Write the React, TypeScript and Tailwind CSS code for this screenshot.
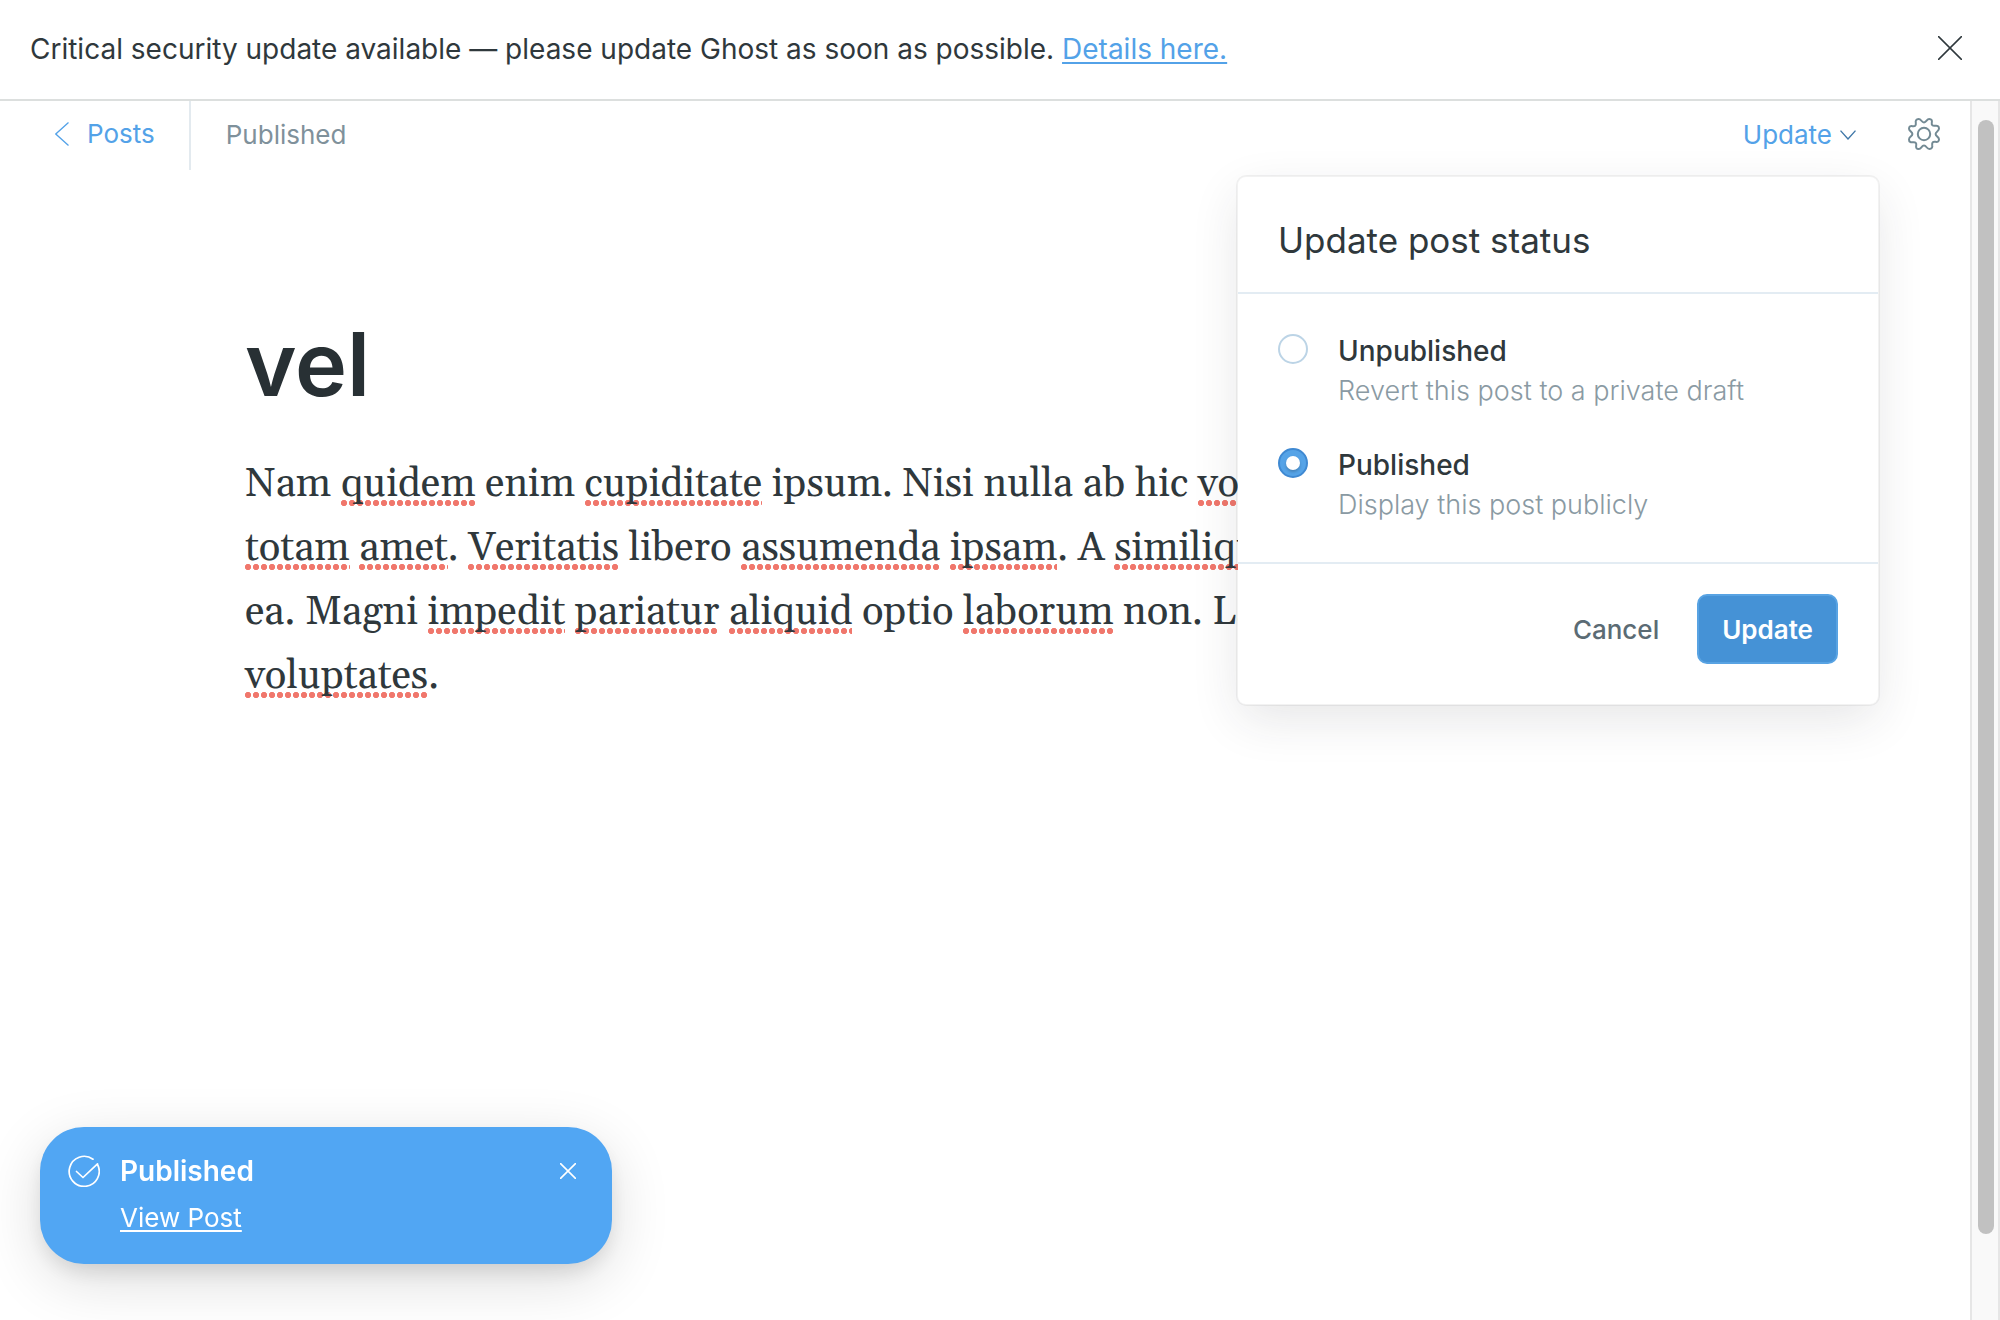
import { useState, type ReactNode } from "react";

function Misspelled({ children }: { children: ReactNode }) {
  return (
    <span className="bg-[radial-gradient(circle_at_3px_3px,#f0776c_2.8px,transparent_3.4px)] bg-[length:8px_6px] bg-[position:left_bottom_4px] bg-repeat-x">
      {children}
    </span>
  );
}

function CloseIcon({ className }: { className: string }) {
  return (
    <svg viewBox="0 0 24 24" className={className} fill="none" stroke="currentColor" aria-hidden="true">
      <path d="M.6.6l22.8 22.8M23.4.6L.6 23.4" strokeLinecap="round" />
    </svg>
  );
}

function GearIcon() {
  return (
    <svg viewBox="0 0 32 32" className="size-8" fill="none" stroke="currentColor" strokeWidth="2" strokeLinecap="round" strokeLinejoin="round" aria-hidden="true">
      <circle cx="16" cy="16" r="6.2" />
      <path d="M16 4.4c2.6 0 2.6-3.4 5.2-3.4s3 1.6 2.6 3.6c-.4 2.2.4 3.6 3.4 3.2c2-.4 3.8.2 3.8 2.8c0 2.8-3.4 2.8-3.4 5.4s3.4 2.6 3.4 5.2s-1.6 3-3.6 2.6c-2.2-.4-3.6.4-3.2 3.4c.4 2-.2 3.8-2.8 3.8c-2.8 0-2.8-3.4-5.4-3.4s-2.6 3.4-5.2 3.4s-3-1.6-2.6-3.6c.4-2.2-.4-3.6-3.4-3.2c-2 .4-3.8-.2-3.8-2.8c0-2.8 3.4-2.8 3.4-5.4s-3.4-2.6-3.4-5.2s1.6-3 3.6-2.6c2.2.4 3.6-.4 3.2-3.4c-.4-2 .2-3.8 2.8-3.8c2.8 0 2.8 3.4 5.4 3.4z" />
    </svg>
  );
}

type Status = "unpublished" | "published";

const options: { id: Status; label: string; hint: string }[] = [
  { id: "unpublished", label: "Unpublished", hint: "Revert this post to a private draft" },
  { id: "published", label: "Published", hint: "Display this post publicly" },
];

function StatusMenu() {
  const [status, setStatus] = useState<Status>("published");
  return (
    <form
      className="absolute top-[74px] right-[90px] z-10 w-[644px] rounded-[10px] border-2 border-black/5 bg-white bg-clip-padding shadow-[0_16px_50px_-4px_rgba(39,44,46,0.12)]"
      onSubmit={(e) => e.preventDefault()}
    >
      <h2 className="border-b-2 border-[#e3ecf3] px-10 pt-[39px] pb-7 text-[35px] leading-[48px]">Update post status</h2>
      <div className="flex flex-col gap-[34px] border-b-2 border-[#e3ecf3] px-10 pt-10 pb-[34px]">
        {options.map((o) => (
          <div key={o.id} className="flex gap-[30px]">
            <input
              type="radio"
              name="status"
              id={o.id}
              checked={status === o.id}
              onChange={() => setStatus(o.id)}
              className="grid size-[30px] shrink-0 appearance-none place-content-center rounded-full border-2 border-[#bcd4e6] bg-white before:size-[14px] before:rounded-full before:bg-white checked:border-[#3f89d2] checked:bg-[#55a3e7] checked:before:shadow-[0_2px_3px_rgba(0,0,0,0.2)]"
            />
            <label htmlFor={o.id}>
              <span className="block text-[28px] leading-[34px] font-medium">{o.label}</span>
              <span className="block text-[27px] leading-[46px] font-light text-[#8a9aa3]">{o.hint}</span>
            </label>
          </div>
        ))}
      </div>
      <div className="flex items-center justify-end gap-[38px] px-10 pt-[30px] pb-10 text-[26px]">
        <button type="button" className="font-medium text-[#5b6b74]">Cancel</button>
        <button type="submit" className="h-[70px] rounded-[10px] border-2 border-[#58a3e3] bg-[#4592d6] px-[23px] font-semibold text-white">
          Update
        </button>
      </div>
    </form>
  );
}

export default function App() {
  return (
    <div className="flex h-screen flex-col overflow-hidden bg-white font-['Inter',sans-serif] text-[#2f383c]">
      <aside className="flex items-start justify-between border-b-2 border-[#dcdfde] pt-[25px] pr-[38px] pb-[26px] pl-[30px]">
        <p className="text-[28px] leading-[48px]">
          Critical security update available — please update Ghost as soon as possible.{" "}
          <a href="#details" className="text-[#53a2e8] underline decoration-2 underline-offset-3">Details here.</a>
        </p>
        <button type="button" aria-label="Dismiss" className="mt-[11px]">
          <CloseIcon className="size-6 stroke-[1.5]" />
        </button>
      </aside>

      <div className="flex min-h-0 flex-1">
        <main className="relative min-w-0 flex-1">
          <header className="flex h-[69px] justify-between pr-[30px] text-[26px]">
            <nav className="flex">
              <a href="#posts" className="flex items-center gap-[18px] border-r-2 border-[#e3eaef] pr-[34px] pb-1 pl-[55px] text-[#53a2e8]">
                <svg viewBox="0 0 14 24" className="h-6 w-[14px]" fill="none" stroke="currentColor" strokeWidth="1.3" aria-hidden="true">
                  <path d="M13.5.5L.8 12l12.7 11.5" />
                </svg>
                Posts
              </a>
              <span className="flex items-center pb-0.5 pl-[35px] text-[#7f919b]">Published</span>
            </nav>
            <div className="flex items-center gap-[52px] pb-0.5">
              <button type="button" className="flex items-center gap-2 text-[#53a2e8]">
                Update
                <svg viewBox="0 0 16 10" className="h-[10px] w-4 text-[#3f77a8]" fill="none" stroke="currentColor" strokeWidth="1.4" aria-hidden="true">
                  <path d="M.5.6L8 9 15.5.6" />
                </svg>
              </button>
              <button type="button" aria-label="Settings" className="pb-0.5 text-[#738a94]">
                <GearIcon />
              </button>
            </div>
          </header>

          <StatusMenu />

          <article className="mx-auto max-w-[1480px] pt-[139px]">
            <h1 className="text-[88px] leading-[110px] font-semibold text-[#283034]">vel</h1>
            <p className="mt-[34px] font-[Georgia,Gelasio,'Liberation_Serif',serif] text-[40px] leading-[64px] whitespace-nowrap">
              Nam <Misspelled>quidem</Misspelled> enim <Misspelled>cupiditate</Misspelled> ipsum. Nisi nulla ab hic{" "}
              <Misspelled>vox</Misspelled>
              <br />
              <Misspelled>totam</Misspelled> <Misspelled>amet</Misspelled>. <Misspelled>Veritatis</Misspelled> libero{" "}
              <Misspelled>assumenda</Misspelled> <Misspelled>ipsam</Misspelled>. A <Misspelled>similique</Misspelled>
              <br />
              ea. Magni <Misspelled>impedit</Misspelled> <Misspelled>pariatur</Misspelled> <Misspelled>aliquid</Misspelled> optio{" "}
              <Misspelled>laborum</Misspelled> non. Labore
              <br />
              <Misspelled>voluptates</Misspelled>.
            </p>
          </article>
        </main>

        <div className="w-[30px] border-x-2 border-[#e6e6e6] bg-[#f9f9f9] px-1.5 pt-[19px] pb-[86px]" aria-hidden="true">
          <div className="h-full w-4 rounded-full bg-[#c1c1c1]" />
        </div>
      </div>

      <div
        role="status"
        className="fixed bottom-14 left-10 flex w-[572px] items-start gap-5 rounded-[44px] bg-[#51a6f3] px-7 pt-6 pb-6 text-white shadow-[0_16px_60px_rgba(0,0,0,0.14),0_10px_24px_-6px_rgba(0,0,0,0.14)]"
      >
        <svg viewBox="0 0 32 32" className="mt-1 size-8" fill="none" stroke="currentColor" strokeWidth="1.7" strokeLinecap="round" strokeLinejoin="round" aria-hidden="true">
          <path d="M25 4.2A15 15 0 1 0 29.6 9.6" />
          <path d="M8.5 16.5l6.5 6L29.5 8.8" />
        </svg>
        <div className="flex flex-1 flex-col items-start gap-1.5 pb-0.5">
          <strong className="text-[28px] leading-10 font-semibold">Published</strong>
          <a href="#view" className="text-[26px] leading-[41px] underline decoration-2 underline-offset-3">View Post</a>
        </div>
        <button type="button" aria-label="Close" className="mt-3 mr-2">
          <CloseIcon className="size-4 stroke-[2.4]" />
        </button>
      </div>
    </div>
  );
}
